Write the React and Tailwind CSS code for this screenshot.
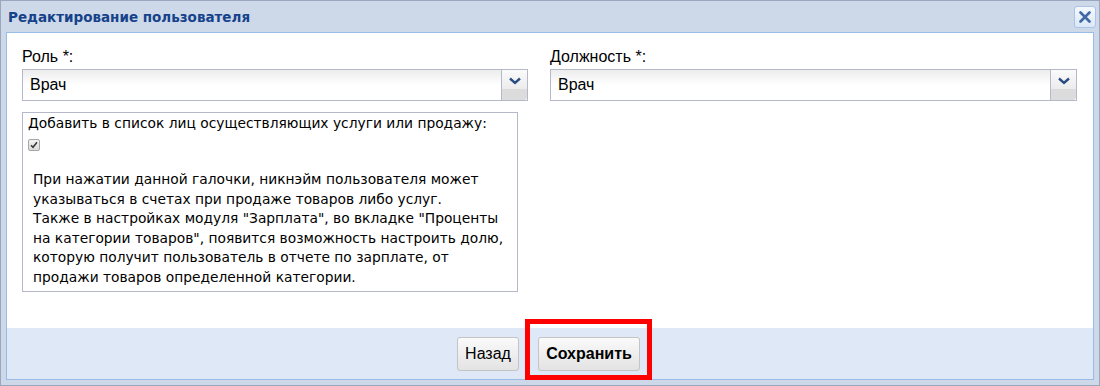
import React from 'react';

const Chevron = () => (
  <svg width="12" height="8" viewBox="0 0 12 8">
    <path d="M1 1.5 L6 6 L11 1.5" fill="none" stroke="#2b4f82" strokeWidth="2.4" />
  </svg>
);

const ComboField = ({ label, value, width }) => {
  return (
    <div className="flex flex-col" style={{ width }}>
      <div className="h-[20px] text-[16px] leading-[20px] text-black">{label}</div>
      <div className="mt-[2px] flex h-[32px] border border-[#b5b8c8] bg-white">
        <div className="flex flex-1 items-center bg-gradient-to-b from-[#ececec] via-white to-white pl-[7px] text-[16px] text-black">
          {value}
        </div>
        <div className="flex w-[26px] flex-col border-l border-[#b5b8c8] rounded-r-[3px] overflow-hidden">
          <div className="flex h-[19px] items-center justify-center bg-gradient-to-b from-[#fafafa] to-[#ececec] pt-[3px]">
            <Chevron />
          </div>
          <div className="flex-1 bg-[#dcdcdc]"></div>
        </div>
      </div>
    </div>
  );
};

const App = () => {
  return (
    <div
      className="flex h-[386px] w-[1100px] flex-col border border-[#99a6bd] bg-[#cdd9e8] px-[5px]"
      style={{ fontFamily: '"Liberation Sans", Arial, sans-serif' }}
    >
      {/* Заголовок окна */}
      <div className="flex h-[31px] items-center justify-between">
        <span
          className="pl-[2px] pt-[1px] text-[13.5px] font-bold text-[#15428b]"
          style={{ fontFamily: '"DejaVu Sans", Tahoma, sans-serif' }}
        >
          Редактирование пользователя
        </span>
        <button className="mr-[-2px] mt-[1px] flex h-[22px] w-[22px] items-center justify-center rounded-[3px] border border-[#a9c4e8] bg-gradient-to-b from-[#f4f8fd] to-[#dce8f7]">
          <svg width="12" height="12" viewBox="0 0 12 12">
            <path d="M1.5 1.5 L10.5 10.5 M10.5 1.5 L1.5 10.5" stroke="#3d6aa5" strokeWidth="2.6" strokeLinecap="round" />
          </svg>
        </button>
      </div>

      {/* Тело окна */}
      <div className="flex flex-1 flex-col border border-[#99bbe8] bg-white">
        <div className="flex h-[295px] flex-col px-[15px] pt-[14px]">
          <div className="flex gap-[22px]">
            <ComboField label="Роль *:" value="Врач" width={506} />
            <ComboField label="Должность *:" value="Врач" width={527} />
          </div>

          <div
            className="mt-[11px] flex h-[180px] w-[496px] flex-col border border-[#b5b8c8] pl-[5px] text-[13.8px] text-black"
            style={{ fontFamily: '"DejaVu Sans", Tahoma, sans-serif' }}
          >
            <div className="mt-[1px] leading-[18px]">Добавить в список лиц осуществляющих услуги или продажу:</div>
            <div className="mt-[7px] flex h-[12px] w-[12px] items-center justify-center rounded-[2px] border border-[#a5a5a5] bg-gradient-to-b from-[#f2f2f2] to-[#dcdcdc]">
              <svg width="8" height="8" viewBox="0 0 8 8">
                <path d="M1 4.2 L3 6.3 L7 1.3" fill="none" stroke="#3a3a3a" strokeWidth="1.6" />
              </svg>
            </div>
            <p className="mt-[19px] pl-[5px] leading-[19.5px]">
              При нажатии данной галочки, никнэйм пользователя может<br />
              указываться в счетах при продаже товаров либо услуг.<br />
              Также в настройках модуля "Зарплата", во вкладке "Проценты<br />
              на категории товаров", появится возможность настроить долю,<br />
              которую получит пользователь в отчете по зарплате, от<br />
              продажи товаров определенной категории.
            </p>
          </div>
        </div>

        {/* Панель кнопок */}
        <div className="relative flex flex-1 items-center justify-center gap-[19px] pr-[3px] bg-[#dfe8f6]">
          <button className="h-[34px] w-[62px] rounded-[3px] border border-[#c4c4c4] bg-gradient-to-b from-[#fafafa] to-[#e3e3e3] text-[16px] text-black">
            Назад
          </button>
          <button className="h-[34px] w-[102px] rounded-[3px] border border-[#c4c4c4] bg-gradient-to-b from-[#fafafa] to-[#e3e3e3] text-[16px] font-bold text-black">
            Сохранить
          </button>
          {/* Красная рамка-выделение */}
          <div className="pointer-events-none absolute left-[518px] top-[-9px] h-[61px] w-[127px] border-[5px] border-[#ff0000]"></div>
        </div>
      </div>
      <div className="h-[5px]"></div>
    </div>
  );
};

export default App;
